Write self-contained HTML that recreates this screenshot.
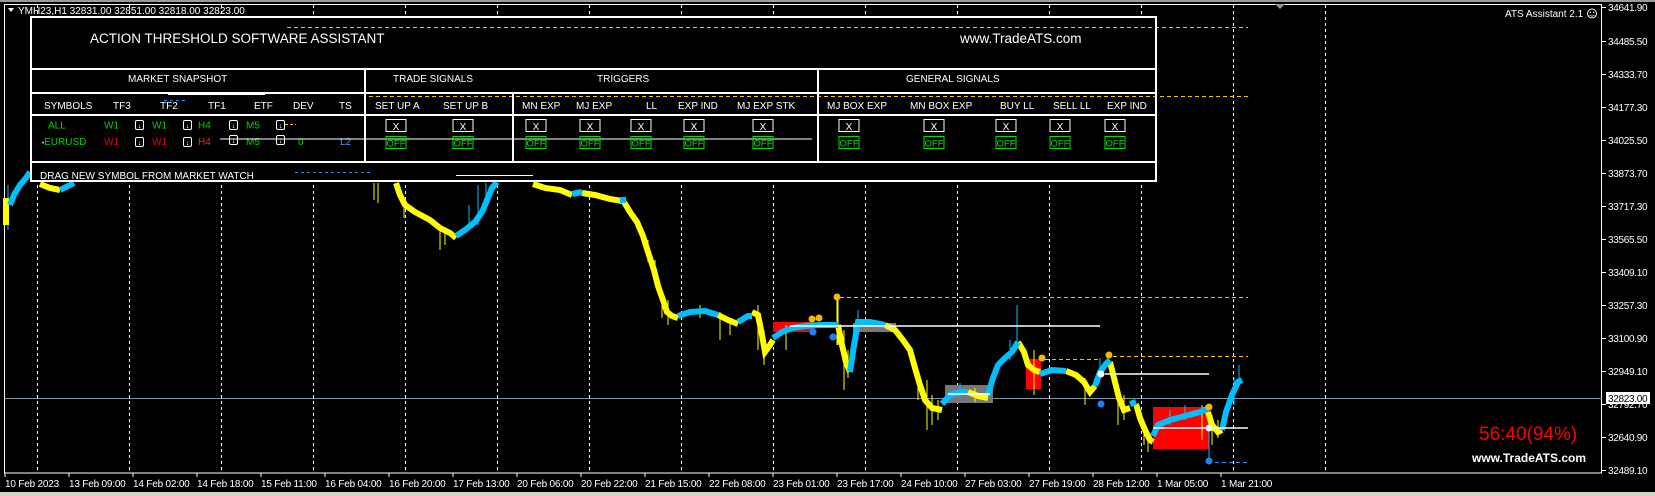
<!DOCTYPE html>
<html><head><meta charset="utf-8"><style>
html,body{margin:0;padding:0;background:#000;}
body{width:1655px;height:496px;overflow:hidden;position:relative;}
svg{position:absolute;left:0;top:0;}
text{font-family:"Liberation Sans",sans-serif;}
</style></head><body>
<svg width="1655" height="496" viewBox="0 0 1655 496" xmlns="http://www.w3.org/2000/svg">
<rect x="0" y="0" width="1655" height="496" fill="#000"/>
<rect x="0" y="0" width="1655" height="2" fill="#9a9a9a"/>
<rect x="0" y="492" width="1655" height="4" fill="#d4d0c8"/>
<!-- grid -->
<g stroke="#fff" stroke-width="1" stroke-dasharray="3,3">
<line x1="37.5" y1="5" x2="37.5" y2="473"/><line x1="129.5" y1="5" x2="129.5" y2="473"/><line x1="221.5" y1="5" x2="221.5" y2="473"/><line x1="313.5" y1="5" x2="313.5" y2="473"/><line x1="405.5" y1="5" x2="405.5" y2="473"/><line x1="497.5" y1="5" x2="497.5" y2="473"/><line x1="589.5" y1="5" x2="589.5" y2="473"/><line x1="681.5" y1="5" x2="681.5" y2="473"/><line x1="773.5" y1="5" x2="773.5" y2="473"/><line x1="865.5" y1="5" x2="865.5" y2="473"/><line x1="957.5" y1="5" x2="957.5" y2="473"/><line x1="1049.5" y1="5" x2="1049.5" y2="473"/><line x1="1141.5" y1="5" x2="1141.5" y2="473"/><line x1="1233.5" y1="5" x2="1233.5" y2="473"/><line x1="1325.5" y1="5" x2="1325.5" y2="473"/>
</g>
<!-- frame -->
<rect x="4.5" y="4.5" width="1597" height="468.5" fill="none" stroke="#fff" stroke-width="1"/>
<polygon points="1275,4 1285,4 1280,9" fill="#8899aa"/>
<!-- current price line -->
<line x1="5" y1="398.5" x2="1602" y2="398.5" stroke="#8594a3" stroke-width="1"/>
<!-- boxes -->
<rect x="773" y="322" width="38" height="10" fill="#f00"/>
<rect x="853" y="323" width="43" height="9" fill="#777"/>
<rect x="945" y="385" width="48" height="18" fill="#777"/>
<rect x="1026" y="359" width="15" height="30" fill="#f00"/>
<rect x="1153" y="407" width="56" height="42" fill="#f00"/>
<!-- dashed level lines -->
<g stroke="#f5c400" stroke-width="1" stroke-dasharray="4,3">
<line x1="287" y1="27.5" x2="1248" y2="27.5"/>
<line x1="369" y1="96.5" x2="1248" y2="96.5"/>
<line x1="840" y1="297.5" x2="1248" y2="297.5"/>
<line x1="1045" y1="359.5" x2="1098" y2="359.5"/>
<line x1="1113" y1="356.5" x2="1248" y2="356.5"/>
</g>
<line x1="1215" y1="462.5" x2="1248" y2="462.5" stroke="#1e90ff" stroke-dasharray="4,3"/>
<!-- wicks -->
<g stroke="#ffff00" stroke-width="1">
<line x1="374" y1="183" x2="374" y2="200"/><line x1="378" y1="183" x2="378" y2="203"/>
<line x1="404" y1="200" x2="404" y2="218"/><line x1="440" y1="225" x2="440" y2="250"/><line x1="445" y1="230" x2="445" y2="245"/>
<line x1="648" y1="240" x2="648" y2="262"/><line x1="655" y1="260" x2="655" y2="285"/><line x1="662" y1="290" x2="662" y2="318"/><line x1="668" y1="300" x2="668" y2="325"/>
<line x1="700" y1="305" x2="700" y2="318"/><line x1="720" y1="312" x2="720" y2="340"/><line x1="730" y1="318" x2="730" y2="335"/>
<line x1="758" y1="305" x2="758" y2="350"/><line x1="764" y1="330" x2="764" y2="365"/><line x1="786" y1="325" x2="786" y2="350"/>
<line x1="838" y1="300" x2="838" y2="345"/><line x1="844" y1="330" x2="844" y2="390"/><line x1="848" y1="350" x2="848" y2="378"/>
<line x1="918" y1="370" x2="918" y2="400"/><line x1="927" y1="380" x2="927" y2="430"/><line x1="932" y1="395" x2="932" y2="425"/><line x1="938" y1="400" x2="938" y2="420"/>
<line x1="975" y1="388" x2="975" y2="402"/><line x1="1034" y1="350" x2="1034" y2="395"/><line x1="1085" y1="378" x2="1085" y2="405"/>
<line x1="1118" y1="385" x2="1118" y2="425"/><line x1="1124" y1="395" x2="1124" y2="420"/><line x1="1144" y1="425" x2="1144" y2="445"/><line x1="1148" y1="430" x2="1148" y2="452"/>
<line x1="1202" y1="405" x2="1202" y2="440"/><line x1="1212" y1="415" x2="1212" y2="445"/><line x1="1218" y1="420" x2="1218" y2="438"/>
<line x1="837" y1="297" x2="837" y2="345"/>
</g>
<g stroke="#00bfff" stroke-width="1">
<line x1="469" y1="205" x2="469" y2="230"/><line x1="478" y1="185" x2="478" y2="225"/><line x1="486" y1="183" x2="486" y2="210"/>
<line x1="858" y1="310" x2="858" y2="340"/><line x1="960" y1="383" x2="960" y2="398"/><line x1="1017" y1="305" x2="1017" y2="345"/>
<line x1="1010" y1="340" x2="1010" y2="360"/><line x1="1100" y1="358" x2="1100" y2="372"/><line x1="1209" y1="410" x2="1209" y2="460"/>
<line x1="1234" y1="378" x2="1234" y2="405"/><line x1="1239" y1="365" x2="1239" y2="382"/><line x1="1170" y1="410" x2="1170" y2="425"/><line x1="1185" y1="405" x2="1185" y2="420"/>
<line x1="8" y1="185" x2="8" y2="230"/>
</g>
<!-- price -->
<g fill="none" stroke-width="6" stroke-linejoin="miter" stroke-linecap="butt">
<g stroke="#ffff00">
<path d="M6,198 L6,225"/>
<path d="M40,184 L50,188 L60,190"/>
<path d="M396,183 L400,195 L405,205 L415,212 L430,220 L440,228 L450,233 L456,238"/>
<path d="M533,184 L545,188 L560,190 L572,195"/>
<path d="M582,193 L595,195 L610,199 L622,201"/>
<path d="M624,202 L630,212 L637,222 L643,236 L648,252 L654,270 L658,286 L663,300 L667,312 L672,316 L678,318"/>
<path d="M718,315 L728,320 L738,324"/>
<path d="M752,312 L758,315 L762,335 L765,352 L770,345 L773,340"/>
<path d="M838,325 L842,345 L846,362 L850,372"/>
<path d="M885,325 L895,330 L903,340 L910,350 L915,368 L920,385 L925,400 L932,408 L942,410"/>
<path d="M968,392 L978,396 L988,398"/>
<path d="M1018,342 L1024,352 L1028,365 L1034,370 L1040,372"/>
<path d="M1066,371 L1076,375 L1084,382 L1090,392 L1095,386"/>
<path d="M1110,362 L1114,378 L1119,398 L1124,410 L1130,408"/>
<path d="M1136,404 L1140,418 L1145,430 L1150,440 L1153,442"/>
<path d="M1208,412 L1212,425 L1218,432 L1222,430"/>
</g>
<g stroke="#00bfff">
<path d="M10,205 L14,195 L20,185 L26,178 L30,172"/>
<path d="M60,190 L68,186 L74,183"/>
<path d="M456,236 L465,230 L475,222 L482,212 L487,200 L492,188 L497,182"/>
<path d="M572,194 L582,192"/>
<path d="M620,200 L626,200"/>
<path d="M678,316 L690,312 L705,311 L718,315"/>
<path d="M738,322 L748,316 L752,316"/>
<path d="M773,338 L782,332 L792,328 L805,326 L820,325 L838,325"/>
<path d="M850,372 L854,345 L858,322 L870,322 L885,325"/>
<path d="M942,404 L950,395 L960,392 L968,392"/>
<path d="M988,395 L993,378 L998,365 L1005,358 L1012,352 L1018,342"/>
<path d="M1040,374 L1052,370 L1066,371"/>
<path d="M1095,386 L1100,372 L1106,364 L1110,360"/>
<path d="M1130,404 L1136,402"/>
<path d="M1153,436 L1158,425 L1170,420 L1185,416 L1200,412 L1208,408"/>
<path d="M1222,430 L1226,412 L1232,395 L1238,382 L1242,380"/>
</g>
</g>
<!-- white lines & dots -->
<g stroke="#fff" stroke-width="1.5">
<line x1="790" y1="326" x2="1100" y2="326"/>
<line x1="948" y1="394" x2="990" y2="394"/>
<line x1="1105" y1="374" x2="1209" y2="374"/>
<line x1="1153" y1="428" x2="1248" y2="428"/>
</g>
<circle cx="837" cy="297" r="3.5" fill="#f5b800"/>
<circle cx="812" cy="319" r="3.5" fill="#f5b800"/>
<circle cx="819" cy="318" r="3.5" fill="#f5b800"/>
<circle cx="813" cy="332" r="3.5" fill="#1e7fff"/>
<circle cx="833" cy="337" r="3.5" fill="#1e7fff"/>
<circle cx="1042" cy="358" r="3.5" fill="#f5b800"/>
<circle cx="1109" cy="355" r="3.5" fill="#f5b800"/>
<circle cx="1101" cy="374" r="3.5" fill="#fff"/>
<circle cx="1101" cy="404" r="3.5" fill="#1e7fff"/>
<circle cx="1209" cy="407" r="3.5" fill="#f5b800"/>
<circle cx="1209" cy="428" r="3.5" fill="#fff"/>
<circle cx="1209" cy="461" r="3.5" fill="#1e7fff"/>

<!-- top info -->
<polygon points="8,8 14,8 11,12" fill="#fff"/>
<text x="18" y="14" font-size="10" fill="#fff">YMH23,H1  32831.00 32851.00 32818.00 32823.00</text>
<text x="1505" y="17" font-size="10" fill="#fff">ATS Assistant 2.1</text>
<circle cx="1592" cy="13.5" r="4.5" fill="none" stroke="#fff" stroke-width="1"/>
<circle cx="1590.3" cy="12.5" r="0.7" fill="#fff"/><circle cx="1593.7" cy="12.5" r="0.7" fill="#fff"/>
<path d="M1589.6,15 Q1592,17.3 1594.4,15" fill="none" stroke="#fff" stroke-width="0.8"/>

<!-- panel -->
<rect x="31" y="17" width="1125" height="164" fill="#000" stroke="#fff" stroke-width="2"/>
<line x1="287" y1="27.5" x2="1155" y2="27.5" stroke="#f5c400" stroke-dasharray="4,3"/>
<line x1="369" y1="96.5" x2="1155" y2="96.5" stroke="#f5c400" stroke-dasharray="4,3"/>
<g stroke="#fff" stroke-width="2">
<line x1="31" y1="69" x2="1156" y2="69"/>
<line x1="31" y1="93" x2="1156" y2="93"/>
<line x1="31" y1="115" x2="1156" y2="115"/>
<line x1="31" y1="162" x2="1156" y2="162"/>
<line x1="365" y1="69" x2="365" y2="162"/>
<line x1="818" y1="69" x2="818" y2="162"/>
<line x1="513" y1="93" x2="513" y2="162"/>
</g>
<line x1="168" y1="94.5" x2="265" y2="94.5" stroke="#fff" stroke-width="1"/>
<line x1="164" y1="100.5" x2="185" y2="100.5" stroke="#1e90ff" stroke-dasharray="3,3"/>
<line x1="295" y1="172.5" x2="371" y2="172.5" stroke="#1e90ff" stroke-dasharray="3,3"/>
<line x1="456" y1="175.5" x2="533" y2="175.5" stroke="#fff"/>
<text x="90" y="43" font-size="13.5" fill="#fff">ACTION THRESHOLD SOFTWARE ASSISTANT</text>
<text x="960" y="43" font-size="13.5" fill="#fff">www.TradeATS.com</text>
<g font-size="10" fill="#fff">
<text x="128" y="82">MARKET SNAPSHOT</text>
<text x="393" y="82">TRADE SIGNALS</text>
<text x="597" y="82">TRIGGERS</text>
<text x="906" y="82">GENERAL SIGNALS</text>
<text x="44" y="109">SYMBOLS</text><text x="113" y="109">TF3</text><text x="160" y="109">TF2</text><text x="208" y="109">TF1</text><text x="254" y="109">ETF</text><text x="293" y="109">DEV</text><text x="339" y="109">TS</text>
<text x="375" y="109">SET UP A</text><text x="443" y="109">SET UP B</text>
<text x="522" y="109">MN EXP</text><text x="576" y="109">MJ EXP</text><text x="646" y="109">LL</text><text x="678" y="109">EXP IND</text><text x="737" y="109">MJ EXP STK</text>
<text x="827" y="109">MJ BOX EXP</text><text x="910" y="109">MN BOX EXP</text><text x="1000" y="109">BUY LL</text><text x="1053" y="109">SELL LL</text><text x="1107" y="109">EXP IND</text>
<text x="40" y="179">DRAG NEW SYMBOL FROM MARKET WATCH</text>
</g>
<g font-size="10">
<text x="48" y="128.5" fill="#00d000">ALL</text>
<text x="104" y="128.5" fill="#00d000">W1</text><text x="152" y="128.5" fill="#00d000">W1</text><text x="198" y="128.5" fill="#00d000">H4</text><text x="246" y="128.5" fill="#00d000">M5</text>
<text x="42" y="145" fill="#00d000"><tspan fill="#fff" font-size="6">•</tspan>EURUSD</text>
<text x="104" y="145" fill="#e00000">W1</text><text x="152" y="145" fill="#e00000">W1</text><text x="198" y="145" fill="#ff2020">H4</text><text x="246" y="145" fill="#00d000">M5</text>
<text x="298" y="145" fill="#00d000">0</text><text x="340" y="145" fill="#5f9ee0">L2</text>
</g>
<line x1="285" y1="124.5" x2="296" y2="124.5" stroke="#f5c400" stroke-dasharray="3,2"/>
<g fill="none" stroke="#fff" stroke-width="1">
<rect x="135.5" y="120.5" width="8" height="9" rx="1.5"/><rect x="183.5" y="120.5" width="8" height="9" rx="1.5"/><rect x="229.5" y="120.5" width="8" height="9" rx="1.5"/><rect x="276.5" y="120.5" width="8" height="9" rx="1.5"/>
<rect x="135.5" y="137.5" width="8" height="9" rx="1.5"/><rect x="183.5" y="137.5" width="8" height="9" rx="1.5"/><rect x="229.5" y="135.5" width="8" height="9" rx="1.5"/><rect x="276.5" y="135.5" width="8" height="9" rx="1.5"/>
</g>
<g fill="#fff" font-size="7" text-anchor="middle">
<text x="139.5" y="128">↓</text><text x="187.5" y="128">↓</text><text x="233.5" y="128">↓</text><text x="280.5" y="128">↓</text>
<text x="139.5" y="145">↓</text><text x="187.5" y="145">↓</text><text x="233.5" y="143">↓</text><text x="280.5" y="143">↓</text>
</g>
<line x1="220" y1="139" x2="812" y2="139" stroke="#fff" stroke-width="1"/>
<g font-size="10" text-anchor="middle">
<g fill="none" stroke="#fff" stroke-width="1">
<rect x="386" y="119.5" width="20" height="12"/><rect x="453" y="119.5" width="20" height="12"/><rect x="526" y="119.5" width="20" height="12"/><rect x="580" y="119.5" width="20" height="12"/><rect x="631" y="119.5" width="20" height="12"/><rect x="684" y="119.5" width="20" height="12"/><rect x="753" y="119.5" width="20" height="12"/><rect x="839" y="119.5" width="20" height="12"/><rect x="924" y="119.5" width="20" height="12"/><rect x="996" y="119.5" width="20" height="12"/><rect x="1050" y="119.5" width="20" height="12"/><rect x="1105" y="119.5" width="20" height="12"/>
</g>
<g fill="none" stroke="#00e000" stroke-width="1">
<rect x="386" y="136.5" width="20" height="12"/><rect x="453" y="136.5" width="20" height="12"/><rect x="526" y="136.5" width="20" height="12"/><rect x="580" y="136.5" width="20" height="12"/><rect x="631" y="136.5" width="20" height="12"/><rect x="684" y="136.5" width="20" height="12"/><rect x="753" y="136.5" width="20" height="12"/><rect x="839" y="136.5" width="20" height="12"/><rect x="924" y="136.5" width="20" height="12"/><rect x="996" y="136.5" width="20" height="12"/><rect x="1050" y="136.5" width="20" height="12"/><rect x="1105" y="136.5" width="20" height="12"/>
</g>
<g fill="#fff">
<text x="396" y="130">X</text><text x="463" y="130">X</text><text x="536" y="130">X</text><text x="590" y="130">X</text><text x="641" y="130">X</text><text x="694" y="130">X</text><text x="763" y="130">X</text><text x="849" y="130">X</text><text x="934" y="130">X</text><text x="1006" y="130">X</text><text x="1060" y="130">X</text><text x="1115" y="130">X</text>
</g>
<g fill="#00e000" font-size="9.5">
<text x="396" y="146.5">OFF</text><text x="463" y="146.5">OFF</text><text x="536" y="146.5">OFF</text><text x="590" y="146.5">OFF</text><text x="641" y="146.5">OFF</text><text x="694" y="146.5">OFF</text><text x="763" y="146.5">OFF</text><text x="849" y="146.5">OFF</text><text x="934" y="146.5">OFF</text><text x="1006" y="146.5">OFF</text><text x="1060" y="146.5">OFF</text><text x="1115" y="146.5">OFF</text>
</g>
</g>

<!-- right labels -->
<text x="1479" y="440" font-size="19" fill="#f00">56:40(94%)</text>
<text x="1472" y="462" font-size="12" font-weight="bold" fill="#fff">www.TradeATS.com</text>
<g stroke="#fff"><line x1="1602" y1="7.5" x2="1606" y2="7.5"/><line x1="1602" y1="41.5" x2="1606" y2="41.5"/><line x1="1602" y1="74.5" x2="1606" y2="74.5"/><line x1="1602" y1="107.5" x2="1606" y2="107.5"/><line x1="1602" y1="140.5" x2="1606" y2="140.5"/><line x1="1602" y1="173.5" x2="1606" y2="173.5"/><line x1="1602" y1="206.5" x2="1606" y2="206.5"/><line x1="1602" y1="239.5" x2="1606" y2="239.5"/><line x1="1602" y1="272.5" x2="1606" y2="272.5"/><line x1="1602" y1="305.5" x2="1606" y2="305.5"/><line x1="1602" y1="338.5" x2="1606" y2="338.5"/><line x1="1602" y1="371.5" x2="1606" y2="371.5"/><line x1="1602" y1="404.5" x2="1606" y2="404.5"/><line x1="1602" y1="437.5" x2="1606" y2="437.5"/><line x1="1602" y1="470.5" x2="1606" y2="470.5"/></g>
<g font-size="10" fill="#fff" letter-spacing="-0.3">
<text x="1608" y="11">34641.90</text><text x="1608" y="45">34485.50</text><text x="1608" y="78">34333.70</text><text x="1608" y="111">34177.30</text><text x="1608" y="144">34025.50</text><text x="1608" y="177">33873.70</text><text x="1608" y="210">33717.30</text><text x="1608" y="243">33565.50</text><text x="1608" y="276">33409.10</text><text x="1608" y="309">33257.30</text><text x="1608" y="342">33100.90</text><text x="1608" y="375">32949.10</text><text x="1608" y="408">32792.70</text><text x="1608" y="441">32640.90</text><text x="1608" y="474">32489.10</text>
</g>
<rect x="1606" y="392" width="44" height="12" fill="#fff"/>
<text x="1608" y="402" font-size="10" fill="#000" letter-spacing="-0.3">32823.00</text>
<!-- date axis -->
<g stroke="#fff"><line x1="5" y1="473" x2="5" y2="477"/><line x1="69" y1="473" x2="69" y2="477"/><line x1="133" y1="473" x2="133" y2="477"/><line x1="197" y1="473" x2="197" y2="477"/><line x1="261" y1="473" x2="261" y2="477"/><line x1="325" y1="473" x2="325" y2="477"/><line x1="389" y1="473" x2="389" y2="477"/><line x1="453" y1="473" x2="453" y2="477"/><line x1="517" y1="473" x2="517" y2="477"/><line x1="581" y1="473" x2="581" y2="477"/><line x1="645" y1="473" x2="645" y2="477"/><line x1="709" y1="473" x2="709" y2="477"/><line x1="773" y1="473" x2="773" y2="477"/><line x1="837" y1="473" x2="837" y2="477"/><line x1="901" y1="473" x2="901" y2="477"/><line x1="965" y1="473" x2="965" y2="477"/><line x1="1029" y1="473" x2="1029" y2="477"/><line x1="1093" y1="473" x2="1093" y2="477"/><line x1="1157" y1="473" x2="1157" y2="477"/><line x1="1221" y1="473" x2="1221" y2="477"/></g>
<g font-size="10" fill="#fff" letter-spacing="-0.2">
<text x="5" y="487">10 Feb 2023</text><text x="69" y="487">13 Feb 09:00</text><text x="133" y="487">14 Feb 02:00</text><text x="197" y="487">14 Feb 18:00</text><text x="261" y="487">15 Feb 11:00</text><text x="325" y="487">16 Feb 04:00</text><text x="389" y="487">16 Feb 20:00</text><text x="453" y="487">17 Feb 13:00</text><text x="517" y="487">20 Feb 06:00</text><text x="581" y="487">20 Feb 22:00</text><text x="645" y="487">21 Feb 15:00</text><text x="709" y="487">22 Feb 08:00</text><text x="773" y="487">23 Feb 01:00</text><text x="837" y="487">23 Feb 17:00</text><text x="901" y="487">24 Feb 10:00</text><text x="965" y="487">27 Feb 03:00</text><text x="1029" y="487">27 Feb 19:00</text><text x="1093" y="487">28 Feb 12:00</text><text x="1157" y="487">1 Mar 05:00</text><text x="1221" y="487">1 Mar 21:00</text>
</g>
</svg>
</body></html>
